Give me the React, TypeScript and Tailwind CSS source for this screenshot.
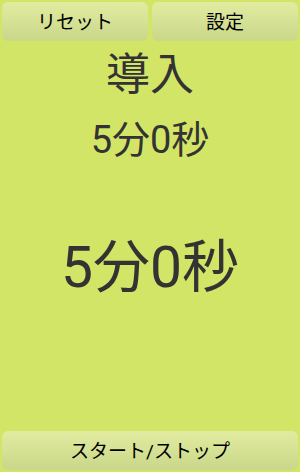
export default function App() {
  const btn =
    "flex h-[39px] items-center justify-center rounded-[6px] bg-gradient-to-b from-[#e2eca0] to-[#c9d789] pt-[3px] text-[19px] text-black";
  return (
    <div
      className="flex h-[472px] w-[300px] flex-col bg-[#d3e566] p-[2px]"
      style={{ fontFamily: 'Roboto, "Noto Sans CJK JP", sans-serif' }}
    >
      <div className="grid grid-cols-2 gap-[4px]">
        <button className={btn}>リセット</button>
        <button className={btn}>設定</button>
      </div>
      <div className="flex flex-1 flex-col items-center text-[#333333]">
        <div className="mt-[12px] text-[44px] leading-[44px]">導入</div>
        <div className="mt-[24px] text-[38px] leading-[38px]">5分0秒</div>
        <div className="mt-[80px] text-[57px] leading-[57px]">5分0秒</div>
      </div>
      <button className={btn}>スタート/ストップ</button>
    </div>
  );
}
